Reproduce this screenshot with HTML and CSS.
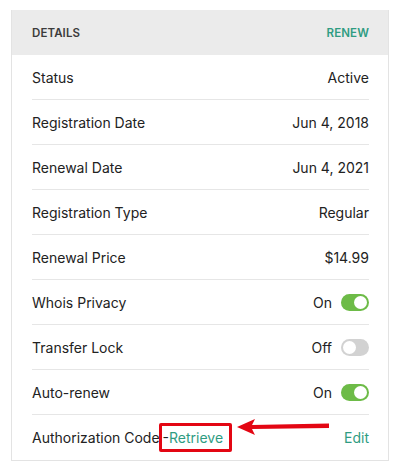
FILE: index.html
```html
<!DOCTYPE html>
<html lang="en">
<head>
  <meta charset="UTF-8" />
  <title>Domain Details</title>
  <link rel="stylesheet" href="styles.css">
</head>
<body>
  <div class="card">
    <div class="card-head">
      <span>Details</span>
      <a class="link">Renew</a>
    </div>
    <div class="row"><span>Status</span><span>Active</span></div>
    <div class="row"><span>Registration Date</span><span>Jun 4, 2018</span></div>
    <div class="row"><span>Renewal Date</span><span>Jun 4, 2021</span></div>
    <div class="row"><span>Registration Type</span><span>Regular</span></div>
    <div class="row"><span>Renewal Price</span><span>$14.99</span></div>
    <div class="row">
      <span>Whois Privacy</span>
      <span class="state">On <i class="toggle on"></i></span>
    </div>
    <div class="row">
      <span>Transfer Lock</span>
      <span class="state">Off <i class="toggle"></i></span>
    </div>
    <div class="row">
      <span>Auto-renew</span>
      <span class="state">On <i class="toggle on"></i></span>
    </div>
    <div class="row last">
      <span>Authorization Code<span class="mark">-<a class="retrieve">Retrieve</a></span></span>
      <a class="edit">Edit</a>
      <svg class="arrow" width="96" height="16" viewBox="0 0 96 16">
        <path d="M0 8 L18 0 L15 6 L92 4.5 L92 9 L15 10 L18 16 Z" fill="#e30613"/>
      </svg>
    </div>
  </div>
</body>
</html>
```

FILE: styles.css
```css
body {
  margin: 0;
  padding: 10px 11px;
  font-family: Inter, 'Noto Sans', sans-serif;
  color: #222;
  background: #fff;
}

.card {
  width: 376px;
  border: 1px solid #e3e3e3;
  border-top: none;
}

.card-head {
  height: 45px;
  background: #ebebeb;
  display: flex;
  align-items: center;
  justify-content: space-between;
  padding: 0 19px 0 20px;
  font-size: 11.5px;
  font-weight: 600;
  text-transform: uppercase;
  color: #3c3c3c;
  letter-spacing: 0.1px;
}

.link, .retrieve, .edit {
  color: #2f9c82;
}

.row {
  height: 44px;
  margin: 0 19px 0 20px;
  border-bottom: 1px solid #e6e6e6;
  display: flex;
  align-items: center;
  justify-content: space-between;
  font-size: 14px;
  position: relative;
}

.row.last {
  border-bottom: none;
  height: 45px;
}

.state {
  display: flex;
  align-items: center;
  gap: 9px;
}

.toggle {
  display: inline-block;
  width: 28px;
  height: 17px;
  border-radius: 9px;
  background: #d2d2d2;
  position: relative;
}

.toggle::after {
  content: "";
  position: absolute;
  top: 2px;
  left: 2px;
  width: 13px;
  height: 13px;
  border-radius: 50%;
  background: #fff;
}

.toggle.on {
  background: #6dbb47;
}

.toggle.on::after {
  left: 13px;
}

.mark {
  display: inline-block;
  border: 3px solid #e30613;
  border-radius: 2px;
  padding: 3px 6px 3px 1px;
  margin-left: -1px;
}

.arrow {
  position: absolute;
  left: 205px;
  top: 4px;
}
```
